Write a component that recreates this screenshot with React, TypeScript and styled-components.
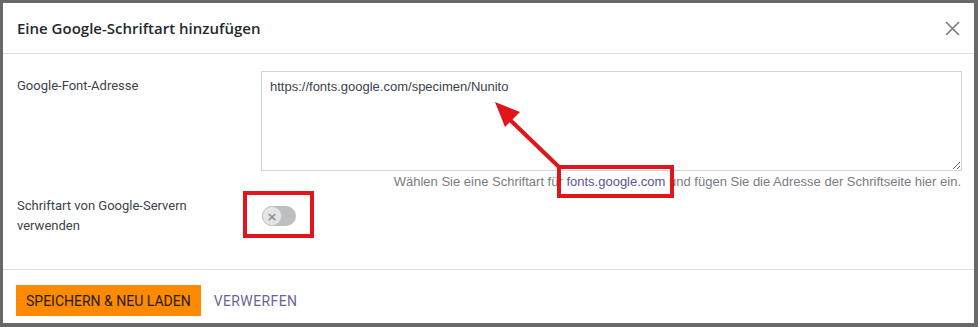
import React from "react";
import styled, { createGlobalStyle } from "styled-components";

const Global = createGlobalStyle`
  html, body { margin: 0; padding: 0; background: #686868; }
  * { box-sizing: border-box; }
`;

const Frame = styled.div`
  width: 978px;
  height: 327px;
  padding: 3px 4px 4px 3px;
  background: #686868;
`;

const Dialog = styled.div`
  position: relative;
  width: 100%;
  height: 100%;
  background: #fff;
  display: flex;
  flex-direction: column;
`;

const Header = styled.div`
  height: 51px;
  display: flex;
  align-items: center;
  justify-content: space-between;
  padding: 0 12px 0 14px;
  border-bottom: 1px solid #dcdcde;
`;

const Title = styled.h1`
  margin: 0;
  font-family: "Open Sans", sans-serif;
  font-weight: 600;
  font-size: 15px;
  color: #23282d;
`;

const Close = styled.button`
  border: 0;
  background: none;
  padding: 0;
  width: 20px;
  height: 20px;
  display: flex;
  align-items: center;
  justify-content: center;
  cursor: pointer;
`;

const Body = styled.div`
  flex: 1;
  padding: 17px 12px 0 14px;
  display: flex;
  flex-direction: column;
`;

const Row = styled.div<{ $mt?: number }>`
  display: grid;
  grid-template-columns: 244px 1fr;
  margin-top: ${(p) => p.$mt ?? 0}px;
`;

const Label = styled.div<{ $pt?: number }>`
  font-family: Roboto, sans-serif;
  font-size: 13px;
  line-height: 20px;
  color: #3c434a;
  padding-top: ${(p) => p.$pt ?? 0}px;
`;

const Field = styled.div`
  display: flex;
  flex-direction: column;
  align-items: flex-end;
`;

const TextArea = styled.textarea`
  width: 100%;
  height: 100px;
  border: 1px solid #d3d3d3;
  border-radius: 0;
  padding: 6px 8px;
  font-family: "Liberation Sans", Arial, sans-serif;
  font-size: 13px;
  line-height: 17px;
  color: #3c434a;
  resize: vertical;
  outline: none;
`;

const Help = styled.p`
  margin: 2px 1px 0 0;
  font-family: "Liberation Sans", Arial, sans-serif;
  font-size: 13px;
  line-height: 18px;
  color: #787c82;
`;

const Link = styled.a`
  color: #5b5394;
  text-decoration: none;
`;

const Toggle = styled.span`
  display: inline-flex;
  align-items: center;
  width: 34px;
  height: 20px;
  border-radius: 10px;
  background: #bcbec0;
  margin: 10px 0 0 1px;
`;

const Knob = styled.span`
  width: 20px;
  height: 20px;
  border-radius: 50%;
  background: #e4e5e6;
  border: 1px solid #c4c6c8;
  display: flex;
  align-items: center;
  justify-content: center;
  color: #8e9093;
  font-family: "DejaVu Sans", sans-serif;
  font-size: 13px;
  font-weight: bold;
  line-height: 1;
`;

const Footer = styled.div`
  height: 54px;
  border-top: 1px solid #dcdcde;
  display: flex;
  align-items: flex-start;
  padding: 15px 0 0 13px;
  gap: 13px;
`;

const Primary = styled.button`
  height: 31px;
  padding: 0 10px;
  border: 0;
  background: #ff8a00;
  color: #1d1d1d;
  font-family: Roboto, sans-serif;
  font-size: 14px;
  cursor: pointer;
`;

const Secondary = styled.button`
  height: 31px;
  padding: 0;
  border: 0;
  background: none;
  color: #6e6396;
  font-family: Roboto, sans-serif;
  font-size: 14px;
  letter-spacing: 0.4px;
  cursor: pointer;
`;

const Highlight = styled.div<{ $x: number; $y: number; $w: number; $h: number }>`
  position: absolute;
  left: ${(p) => p.$x}px;
  top: ${(p) => p.$y}px;
  width: ${(p) => p.$w}px;
  height: ${(p) => p.$h}px;
  border: 4px solid #e0161c;
  pointer-events: none;
`;

const Arrow = styled.svg`
  position: absolute;
  left: 0;
  top: 0;
  pointer-events: none;
`;

export default function App() {
  return (
    <>
      <Global />
      <Frame>
        <Dialog>
          <Header>
            <Title>Eine Google-Schriftart hinzufügen</Title>
            <Close aria-label="Schließen">
              <svg width="15" height="15" viewBox="0 0 15 15">
                <path d="M1 1L14 14M14 1L1 14" stroke="#7a7a7a" strokeWidth="1.6" />
              </svg>
            </Close>
          </Header>
          <Body>
            <Row>
              <Label $pt={5}>Google-Font-Adresse</Label>
              <Field>
                <TextArea defaultValue="https://fonts.google.com/specimen/Nunito" />
                <Help>
                  Wählen Sie eine Schriftart für <Link href="#">fonts.google.com</Link> und fügen Sie die Adresse der Schriftseite hier ein.
                </Help>
              </Field>
            </Row>
            <Row $mt={5}>
              <Label>
                Schriftart von Google-Servern
                <br />
                verwenden
              </Label>
              <div>
                <Toggle>
                  <Knob>×</Knob>
                </Toggle>
              </div>
            </Row>
          </Body>
          <Footer>
            <Primary>SPEICHERN &amp; NEU LADEN</Primary>
            <Secondary>VERWERFEN</Secondary>
          </Footer>
          <Highlight $x={554} $y={162} $w={117} $h={33} />
          <Highlight $x={240} $y={188} $w={71} $h={47} />
          <Arrow width="971" height="320" viewBox="0 0 971 320">
            <line x1="556" y1="164" x2="502" y2="112" stroke="#e0161c" strokeWidth="4" />
            <polygon points="492,99 517,109 502,124" fill="#e0161c" />
          </Arrow>
        </Dialog>
      </Frame>
    </>
  );
}
